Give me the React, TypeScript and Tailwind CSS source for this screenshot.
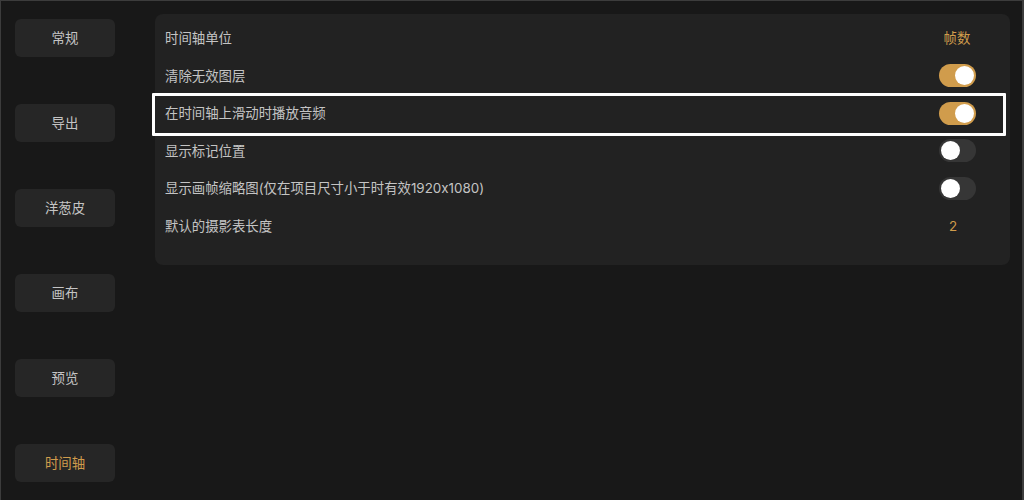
import React from "react";

const tabs = ["常规", "导出", "洋葱皮", "画布", "预览", "时间轴"];

type Row =
  | { label: string; kind: "text"; value: string; shift?: boolean }
  | { label: string; kind: "toggle"; on: boolean };

const rows: Row[] = [
  { label: "时间轴单位", kind: "text", value: "帧数" },
  { label: "清除无效图层", kind: "toggle", on: true },
  { label: "在时间轴上滑动时播放音频", kind: "toggle", on: true },
  { label: "显示标记位置", kind: "toggle", on: false },
  { label: "显示画帧缩略图(仅在项目尺寸小于时有效1920x1080)", kind: "toggle", on: false },
  { label: "默认的摄影表长度", kind: "text", value: "2", shift: true },
];

function Toggle({ on }: { on: boolean }) {
  return (
    <div
      className={
        "w-[37px] h-[23px] rounded-full p-[2px] flex items-center " +
        (on ? "bg-[#d09c4c] justify-end" : "bg-[#363636] justify-start")
      }
    >
      <div className="w-[19px] h-[19px] rounded-full bg-white" />
    </div>
  );
}

export default function App() {
  return (
    <div
      className="w-[1024px] h-[500px] bg-[#181818] border-l border-t border-r-2 border-[#3c3c3c] flex overflow-hidden"
      style={{ fontFamily: 'Inter, "Noto Sans CJK SC", sans-serif' }}
    >
      <div className="w-[154px] shrink-0 pl-[14px] pt-[18px] flex flex-col gap-[47px]">
        {tabs.map((t, i) => (
          <div
            key={t}
            className={
              "w-[100px] h-[38px] rounded-md bg-[#262626] flex items-center justify-center text-[13.4px] " +
              (i === tabs.length - 1 ? "text-[#d09c4c]" : "text-[#c4c4c4]")
            }
          >
            {t}
          </div>
        ))}
      </div>

      <div className="pt-[13px]">
        <div className="relative w-[855px] h-[251px] rounded-lg bg-[#222222] pt-[5.5px]">
          {rows.map((r) => (
            <div key={r.label} className="h-[37.5px] flex items-center pl-[10px]">
              <span className="flex-1 text-[13.4px] text-[#c4c4c4]">{r.label}</span>
              <div className="w-[80px] mr-[13px] flex justify-center">
                {r.kind === "toggle" ? (
                  <Toggle on={r.on} />
                ) : (
                  <span className={"text-[13.4px] text-[#d09c4c] " + (r.shift ? "pr-[8px]" : "")}>{r.value}</span>
                )}
              </div>
            </div>
          ))}
          {/* focus ring on the third row */}
          <div className="absolute left-[-3px] top-[79px] w-[854px] h-[43px] border-[3px] border-white rounded-[1px] pointer-events-none" />
        </div>
      </div>
    </div>
  );
}
